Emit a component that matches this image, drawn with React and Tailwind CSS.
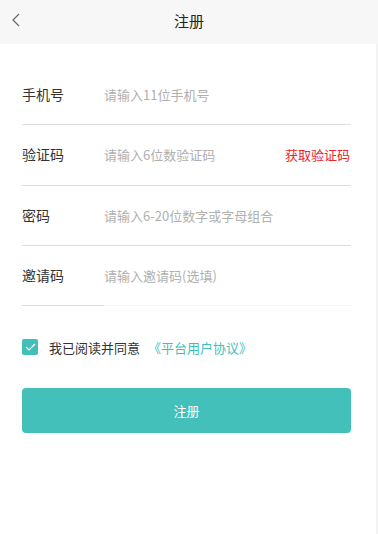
import React, { useState } from 'react';

const font = { fontFamily: '"Noto Sans CJK SC", "Noto Sans", sans-serif' };

function Row({ label, placeholder, action, last }) {
  return (
    <div className="flex h-[60.33px] items-stretch">
      <div className={`w-[82px] flex items-center border-b ${last ? 'border-[#dcdcdc]' : 'border-[#dedede]'} text-[14px] text-[#333]`}>
        {label}
      </div>
      <div className={`flex-1 flex items-center justify-between border-b ${last ? 'border-[#f5f5f5]' : 'border-[#dedede]'}`}>
        <input
          className="flex-1 min-w-0 outline-none bg-transparent text-[13px] text-[#333] placeholder:text-[#b0b0b0]"
          placeholder={placeholder}
        />
        {action && <button className="text-[13px] text-[#e8262f] mr-[1px]">{action}</button>}
      </div>
    </div>
  );
}

export default function App() {
  const [agree, setAgree] = useState(true);

  return (
    <div className="w-[378px] h-[534px] bg-white flex flex-col" style={font}>
      <div className="h-[44px] bg-[#f7f7f7] relative flex items-center justify-center">
        <button className="absolute left-[8px] top-[10px] w-[14px] h-[20px] flex items-center justify-center">
          <svg width="9" height="14" viewBox="0 0 9 14" fill="none">
            <path d="M8 1L2 7l6 6" stroke="#666" strokeWidth="1.2" />
          </svg>
        </button>
        <span className="text-[15px] text-[#222] -mt-[1px]">注册</span>
      </div>

      <div className="flex-1 border-r-2 border-[#f3f3f3]">
        <div className="pl-[22px] pr-[25px] pt-[21px]">
          <Row label="手机号" placeholder="请输入11位手机号" />
          <Row label="验证码" placeholder="请输入6位数验证码" action="获取验证码" />
          <Row label="密码" placeholder="请输入6-20位数字或字母组合" />
          <Row label="邀请码" placeholder="请输入邀请码(选填)" last />

          <div className="flex items-center mt-[33px] h-[16px]">
            <button
              onClick={() => setAgree(!agree)}
              className={`w-[16px] h-[16px] rounded-[2px] flex items-center justify-center ${agree ? 'bg-[#42bfb9]' : 'border border-[#ccc]'}`}
            >
              {agree && (
                <svg width="11" height="8" viewBox="0 0 11 8" fill="none">
                  <path d="M1 4l3 3 6-6" stroke="#fff" strokeWidth="1.2" />
                </svg>
              )}
            </button>
            <span className="ml-[11px] text-[13px] text-[#333]">我已阅读并同意</span>
            <span className="ml-[8px] text-[13px] text-[#42bfb9]">《平台用户协议》</span>
          </div>

          <button className="mt-[33px] w-full h-[45px] rounded-[4px] bg-[#43c0ba] text-white text-[13px]">
            注册
          </button>
        </div>
      </div>
    </div>
  );
}
